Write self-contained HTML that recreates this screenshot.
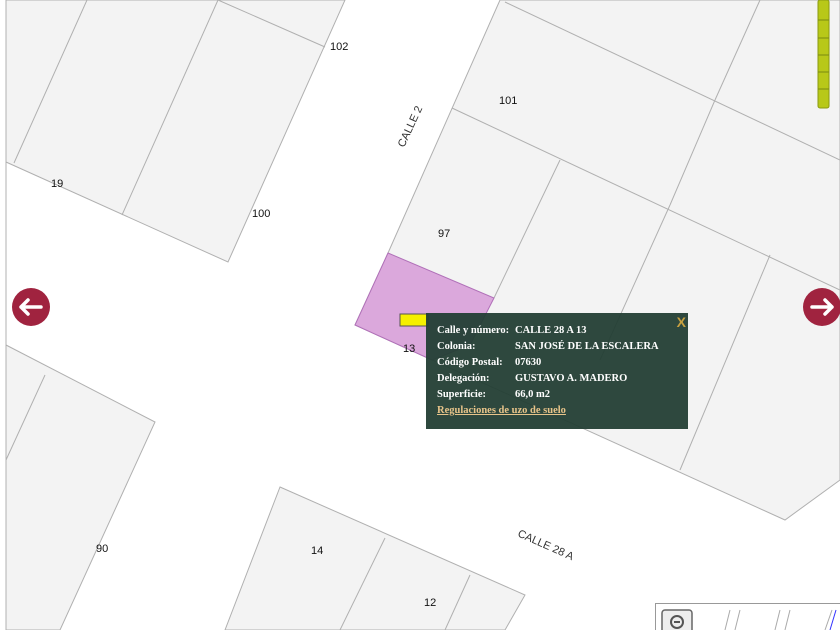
<!DOCTYPE html>
<html><head><meta charset="utf-8"><style>
body{margin:0;width:840px;height:630px;overflow:hidden;background:#fff;font-family:"Liberation Sans",sans-serif}
#pop{position:absolute;left:426px;top:313px;width:262px;height:116px;background:rgba(35,62,52,0.95);font-family:"Liberation Serif",serif;font-weight:bold;font-size:10.5px;color:#fff;box-sizing:border-box;padding:10px 0 0 11px;line-height:16px}
#pop .r span{display:inline-block;width:78px}
#pop a{color:#e8c48a;text-decoration:underline}
#pop .x{position:absolute;right:2px;top:1px;color:#c8a040;font-size:14px;font-family:"Liberation Sans",sans-serif}
</style></head><body>
<svg width="840" height="630" style="position:absolute;left:0;top:0" font-family="Liberation Sans" font-size="11">
<rect x="0" y="0" width="840" height="630" fill="#fff"/>
<g fill="#f3f3f3" stroke="#b0b0b0" stroke-width="1">
<polygon points="6,0 345,0 228,262 6,162"/>
<polygon points="500,0 840,0 840,480 785,520 355,325 388,253"/>
<polygon points="6,345 155,422 60,630 6,630"/>
<polygon points="280,487 525,595 505,630 225,630"/>
</g>
<g stroke="#b0b0b0" fill="none">
<line x1="14" y1="163" x2="87" y2="0"/>
<line x1="122" y1="215" x2="218" y2="0"/>
<line x1="218" y1="0" x2="325" y2="47"/>
<line x1="505" y1="2" x2="840" y2="160"/>
<line x1="452" y1="108" x2="840" y2="290"/>
<line x1="760" y1="0" x2="715" y2="100"/>
<line x1="715" y1="100" x2="670" y2="205"/>
<line x1="560" y1="160" x2="494" y2="298"/>
<line x1="670" y1="205" x2="600" y2="360"/>
<line x1="770" y1="255" x2="680" y2="470"/>
<line x1="45" y1="375" x2="6" y2="460"/>
<line x1="385" y1="538" x2="340" y2="630"/>
<line x1="470" y1="575" x2="445" y2="630"/>
<line x1="6" y1="0" x2="6" y2="630"/>
</g>
<polygon points="388,253 494,298 470,345 432,360 355,325" fill="#dba8dc" stroke="#b070b8"/>
<rect x="400" y="314" width="28" height="12" fill="#f5f000" stroke="#555"/>
<g fill="#111">
<text x="330" y="50">102</text><text x="499" y="104">101</text><text x="51" y="187">19</text>
<text x="252" y="217">100</text><text x="438" y="237">97</text><text x="403" y="352">13</text>
<text x="96" y="552">90</text><text x="311" y="554">14</text><text x="424" y="606">12</text>
<text x="0" y="0" transform="translate(404,148) rotate(-65)" font-size="11" fill="#333">CALLE 2</text>
<text x="0" y="0" transform="translate(517,536) rotate(24)" font-size="11" fill="#333">CALLE 28 A</text>
</g>
<circle cx="31" cy="307" r="19" fill="#a0233f"/>
<path d="M21 307h20M21 307l7-7M21 307l7 7" stroke="#fff" stroke-width="3.5" fill="none" stroke-linecap="round"/>
<circle cx="822" cy="307" r="19" fill="#a0233f"/>
<path d="M812 307h20M832 307l-7-7M832 307l-7 7" stroke="#fff" stroke-width="3.5" fill="none" stroke-linecap="round"/>
<rect x="818" y="0" width="11" height="108" rx="2" fill="#b8c818" stroke="#8a9a10"/>
<g stroke="#7a8a10"><line x1="818" y1="20" x2="829" y2="20"/><line x1="818" y1="38" x2="829" y2="38"/><line x1="818" y1="55" x2="829" y2="55"/><line x1="818" y1="72" x2="829" y2="72"/><line x1="818" y1="89" x2="829" y2="89"/></g>
<rect x="655.5" y="603.5" width="190" height="30" fill="#fff" stroke="#999"/>
<rect x="662" y="610" width="30" height="25" rx="3" fill="#eee" stroke="#666" stroke-width="1.5"/>
<circle cx="677" cy="622" r="6" fill="none" stroke="#555" stroke-width="2"/>
<line x1="674" y1="622" x2="680" y2="622" stroke="#555" stroke-width="2"/>
<g stroke="#aaa"><line x1="725" y1="630" x2="730" y2="610"/><line x1="735" y1="630" x2="740" y2="610"/><line x1="775" y1="630" x2="780" y2="610"/><line x1="785" y1="630" x2="790" y2="610"/><line x1="825" y1="630" x2="832" y2="610"/></g>
<line x1="830" y1="630" x2="836" y2="610" stroke="#33f"/>
</svg>
<div id="pop"><div class="x">X</div>
<div class="r"><span>Calle y número:</span>CALLE 28 A 13</div>
<div class="r"><span>Colonia:</span>SAN JOSÉ DE LA ESCALERA</div>
<div class="r"><span>Código Postal:</span>07630</div>
<div class="r"><span>Delegación:</span>GUSTAVO A. MADERO</div>
<div class="r"><span>Superficie:</span>66,0 m2</div>
<div><a>Regulaciones de uzo de suelo</a></div>
</div>
</body></html>
